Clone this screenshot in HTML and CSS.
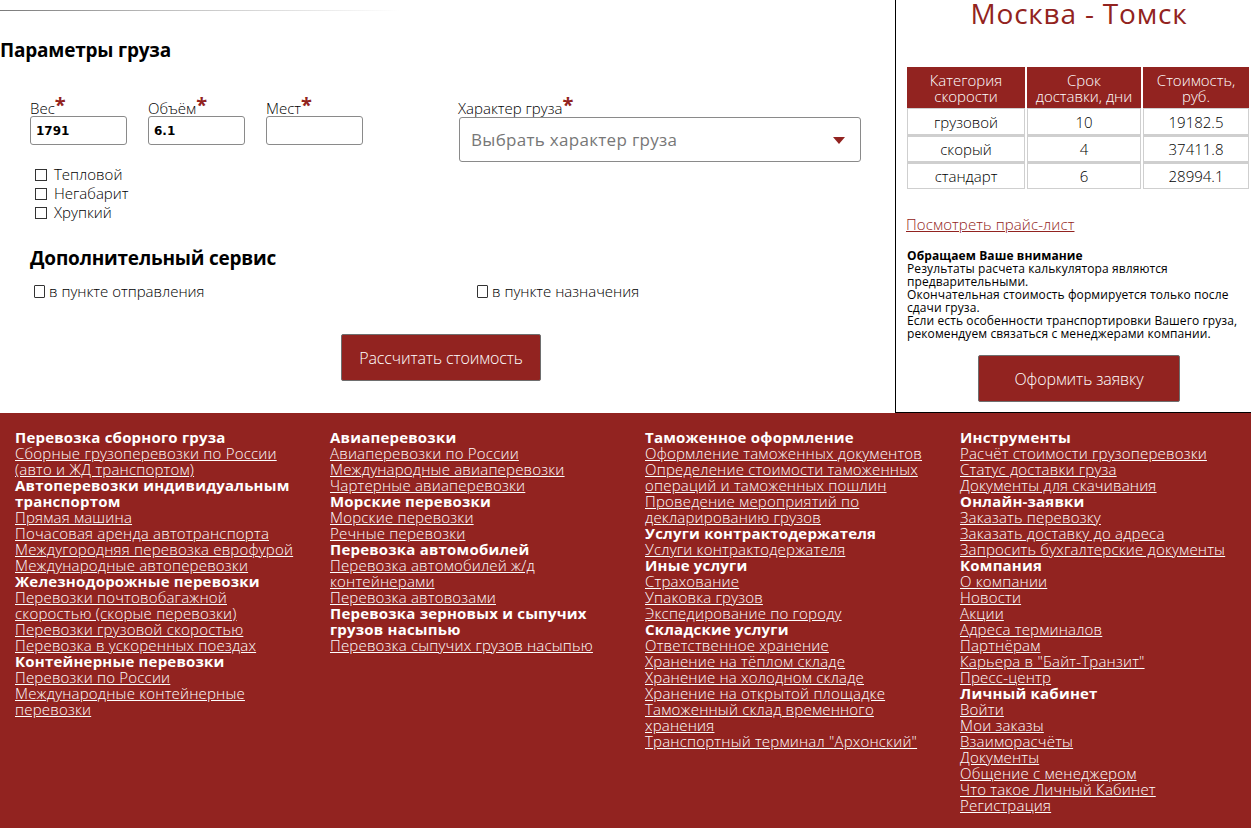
FILE: index.html
```html
<!DOCTYPE html>
<html lang="ru">
<head>
<meta charset="utf-8">
<title>Расчёт стоимости</title>
<link rel="stylesheet" href="styles.css">
</head>
<body>
<div class="top">
  <main class="calc">
    <div class="rule"></div>
    <h2 class="title">Параметры груза</h2>
    <div class="fields">
      <div class="field">
        <label class="lbl">Вес<span class="req">*</span></label>
        <input class="inp" type="text" value="1791">
      </div>
      <div class="field">
        <label class="lbl">Объём<span class="req">*</span></label>
        <input class="inp" type="text" value="6.1">
      </div>
      <div class="field">
        <label class="lbl">Мест<span class="req">*</span></label>
        <input class="inp" type="text" value="">
      </div>
      <div class="field field-wide">
        <label class="lbl">Характер груза<span class="req">*</span></label>
        <div class="select">
          <span class="ph">Выбрать характер груза</span>
          <svg class="caret" width="12" height="7" viewBox="0 0 12 7"><polygon points="0,0 12,0 6,7" fill="#922320"/></svg>
        </div>
      </div>
    </div>
    <div class="checks">
      <label class="chk"><span class="box"></span>Тепловой</label>
      <label class="chk"><span class="box"></span>Негабарит</label>
      <label class="chk"><span class="box"></span>Хрупкий</label>
    </div>
    <h2 class="subtitle">Дополнительный сервис</h2>
    <div class="services">
      <label class="svc"><span class="box box-tall"></span>в пункте отправления</label>
      <label class="svc"><span class="box box-tall"></span>в пункте назначения</label>
    </div>
    <div class="btn-row">
      <button class="btn">Рассчитать стоимость</button>
    </div>
  </main>
  <aside class="result">
    <h1 class="route">Москва - Томск</h1>
    <table class="tbl">
      <thead>
        <tr><th>Категория<br>скорости</th><th>Срок<br>доставки, дни</th><th>Стоимость,<br>руб.</th></tr>
      </thead>
      <tbody>
        <tr><td>грузовой</td><td>10</td><td>19182.5</td></tr>
        <tr><td>скорый</td><td>4</td><td>37411.8</td></tr>
        <tr><td>стандарт</td><td>6</td><td>28994.1</td></tr>
      </tbody>
    </table>
    <a class="price" href="#">Посмотреть прайс-лист</a>
    <div class="note">
      <b>Обращаем Ваше внимание</b><br>
      Результаты расчета калькулятора являются предварительными.<br>
      Окончательная стоимость формируется только после сдачи груза.<br>
      Если есть особенности транспортировки Вашего груза, рекомендуем связаться с менеджерами компании.
    </div>
    <div class="btn-row2">
      <button class="btn btn2">Оформить заявку</button>
    </div>
  </aside>
</div>
<footer class="footer">
  <div class="col">
    <div class="h">Перевозка сборного груза</div>
    <a href="#">Сборные грузоперевозки по России (авто и ЖД транспортом)</a>
    <div class="h">Автоперевозки индивидуальным транспортом</div>
    <a href="#">Прямая машина</a>
    <a href="#">Почасовая аренда автотранспорта</a>
    <a href="#">Междугородняя перевозка еврофурой</a>
    <a href="#">Международные автоперевозки</a>
    <div class="h">Железнодорожные перевозки</div>
    <a href="#">Перевозки почтовобагажной скоростью (скорые перевозки)</a>
    <a href="#">Перевозки грузовой скоростью</a>
    <a href="#">Перевозка в ускоренных поездах</a>
    <div class="h">Контейнерные перевозки</div>
    <a href="#">Перевозки по России</a>
    <a href="#">Международные контейнерные перевозки</a>
  </div>
  <div class="col">
    <div class="h">Авиаперевозки</div>
    <a href="#">Авиаперевозки по России</a>
    <a href="#">Международные авиаперевозки</a>
    <a href="#">Чартерные авиаперевозки</a>
    <div class="h">Морские перевозки</div>
    <a href="#">Морские перевозки</a>
    <a href="#">Речные перевозки</a>
    <div class="h">Перевозка автомобилей</div>
    <a href="#">Перевозка автомобилей ж/д контейнерами</a>
    <a href="#">Перевозка автовозами</a>
    <div class="h">Перевозка зерновых и сыпучих грузов насыпью</div>
    <a href="#">Перевозка сыпучих грузов насыпью</a>
  </div>
  <div class="col">
    <div class="h">Таможенное оформление</div>
    <a href="#">Оформление таможенных документов</a>
    <a href="#">Определение стоимости таможенных операций и таможенных пошлин</a>
    <a href="#">Проведение мероприятий по декларированию грузов</a>
    <div class="h">Услуги контрактодержателя</div>
    <a href="#">Услуги контрактодержателя</a>
    <div class="h">Иные услуги</div>
    <a href="#">Страхование</a>
    <a href="#">Упаковка грузов</a>
    <a href="#">Экспедирование по городу</a>
    <div class="h">Складские услуги</div>
    <a href="#">Ответственное хранение</a>
    <a href="#">Хранение на тёплом складе</a>
    <a href="#">Хранение на холодном складе</a>
    <a href="#">Хранение на открытой площадке</a>
    <a href="#">Таможенный склад временного хранения</a>
    <a href="#">Транспортный терминал "Архонский"</a>
  </div>
  <div class="col">
    <div class="h">Инструменты</div>
    <a href="#">Расчёт стоимости грузоперевозки</a>
    <a href="#">Статус доставки груза</a>
    <a href="#">Документы для скачивания</a>
    <div class="h">Онлайн-заявки</div>
    <a href="#">Заказать перевозку</a>
    <a href="#">Заказать доставку до адреса</a>
    <a href="#">Запросить бухгалтерские документы</a>
    <div class="h">Компания</div>
    <a href="#">О компании</a>
    <a href="#">Новости</a>
    <a href="#">Акции</a>
    <a href="#">Адреса терминалов</a>
    <a href="#">Партнёрам</a>
    <a href="#">Карьера в "Байт-Транзит"</a>
    <a href="#">Пресс-центр</a>
    <div class="h">Личный кабинет</div>
    <a href="#">Войти</a>
    <a href="#">Мои заказы</a>
    <a href="#">Взаиморасчёты</a>
    <a href="#">Документы</a>
    <a href="#">Общение с менеджером</a>
    <a href="#">Что такое Личный Кабинет</a>
    <a href="#">Регистрация</a>
  </div>
</footer>
</body>
</html>
```

FILE: styles.css
```css
* { box-sizing: border-box; }
html, body { margin: 0; padding: 0; }
body {
  width: 1251px;
  font-family: "Open Sans", "Noto Sans", sans-serif;
  color: #000;
  background: #fff;
}
.top {
  display: flex;
  height: 413px;
}
.calc {
  width: 895px;
  padding-top: 10px;
}
.rule {
  height: 1px;
  width: 400px;
  background: linear-gradient(to right, #7a7a7a, #bdbdbd 40%, rgba(255,255,255,0) 100%);
}
.title {
  margin: 27px 0 0;
  font-size: 19px;
  font-weight: 700;
  line-height: 24px;
  letter-spacing: -0.2px;
}
.fields {
  display: flex;
  align-items: flex-start;
  margin-top: 38px;
  padding-left: 30px;
}
.field {
  display: flex;
  flex-direction: column;
  width: 97px;
  margin-right: 21px;
}
.field-wide {
  width: 402px;
  margin-left: 75px;
  margin-right: 0;
}
.lbl {
  font-size: 15px;
  line-height: 16px;
  height: 16px;
  font-weight: 300;
  letter-spacing: 0;
  white-space: nowrap;
}
.req {
  color: #922320;
  font-weight: 700;
  font-size: 20px;
  line-height: 10px;
  vertical-align: top;
}
.inp {
  width: 97px;
  height: 29px;
  border: 1px solid #8a8a8a;
  border-radius: 3px;
  padding: 0 5px;
  font-family: "DejaVu Sans", "Open Sans", sans-serif;
  font-weight: 700;
  font-size: 12px;
  color: #000;
  outline: none;
}
.field-wide .lbl { margin-left: -1px; }
.select {
  height: 45px;
  border: 1px solid #8a8a8a;
  border-radius: 3px;
  display: flex;
  align-items: center;
  justify-content: space-between;
  padding: 0 15px 0 11px;
  margin-top: 1px;
}
.ph {
  font-size: 17px;
  color: #777;
  letter-spacing: 0.3px;
}
.caret { display: block; margin-top: 1px; }
.checks {
  display: flex;
  flex-direction: column;
  margin-top: 3px;
  padding-left: 35px;
}
.chk, .svc {
  display: flex;
  align-items: center;
  font-size: 15px;
  line-height: 19px;
  font-weight: 300;
  letter-spacing: 0;
}
.box {
  width: 12px;
  height: 12px;
  border: 1px solid #333;
  margin-right: 7px;
  flex: none;
}
.box-tall {
  width: 11px;
  height: 13px;
  margin-right: 4px;
  border-radius: 1px;
}
.subtitle {
  margin: 24px 0 0 30px;
  font-size: 19px;
  font-weight: 700;
  line-height: 24px;
  letter-spacing: -0.2px;
}
.services {
  display: flex;
  margin-top: 12px;
  padding-left: 34px;
}
.services .svc:first-child { width: 443px; }
.btn-row {
  display: flex;
  justify-content: center;
  margin-top: 33px;
  padding-right: 13px;
}
.btn {
  width: 200px;
  height: 47px;
  background: #922320;
  color: #fff;
  border: 1px solid #6e6e6e;
  border-radius: 2px;
  font-family: "Open Sans", "Noto Sans", sans-serif;
  font-size: 16px;
  font-weight: 300;
  letter-spacing: -0.1px;
  cursor: pointer;
}
.result {
  width: 356px;
  border-left: 1px solid #000;
  border-bottom: 1px solid #000;
  padding-left: 11px;
}
.route {
  margin: -5px 0 0;
  text-align: center;
  color: #922320;
  font-size: 28px;
  font-weight: 400;
  line-height: 36px;
  letter-spacing: 0.8px;
}
.tbl {
  margin-top: 36px;
  width: 346px;
  border-collapse: separate;
  border-spacing: 2px 0;
  margin-left: -2px;
  font-size: 15px;
  text-align: center;
}
.tbl th {
  background: #922320;
  color: #fff;
  font-weight: 300;
  line-height: 16px;
  height: 41px;
  padding: 0;
  letter-spacing: 0;
}
.tbl th:nth-child(1) { width: 118px; }
.tbl th:nth-child(2) { width: 114px; }
.tbl td {
  border: 1px solid #cfcfcf;
  height: 27px;
  padding: 0;
  font-weight: 300;
  line-height: 16px;
}
.tbl tbody tr + tr td { border-top: 2px solid #cfcfcf; }
.price {
  display: inline-block;
  margin-top: 26px;
  margin-left: -1px;
  color: #922320;
  font-size: 15px;
  font-weight: 300;
  line-height: 18px;
  letter-spacing: 0.1px;
}
.note {
  margin-top: 14px;
  font-size: 12px;
  line-height: 13px;
  letter-spacing: 0.1px;
  padding-right: 6px;
}
.note b { font-weight: 700; }
.btn-row2 {
  display: flex;
  justify-content: center;
  margin-top: 15px;
}
.btn2 { width: 202px; }
.footer {
  background: #922320;
  color: #fff;
  display: grid;
  grid-template-columns: repeat(4, 315px);
  padding: 16px 0 10px 15px;
  height: 415px;
}
.col {
  display: flex;
  flex-direction: column;
  align-items: flex-start;
  font-size: 15px;
  line-height: 16px;
  padding-right: 25px;
}
.col .h {
  font-weight: 700;
  letter-spacing: 0.2px;
}
.col a {
  color: #fff;
  font-weight: 300;
  text-decoration: underline;
  letter-spacing: 0.2px;
}
```
